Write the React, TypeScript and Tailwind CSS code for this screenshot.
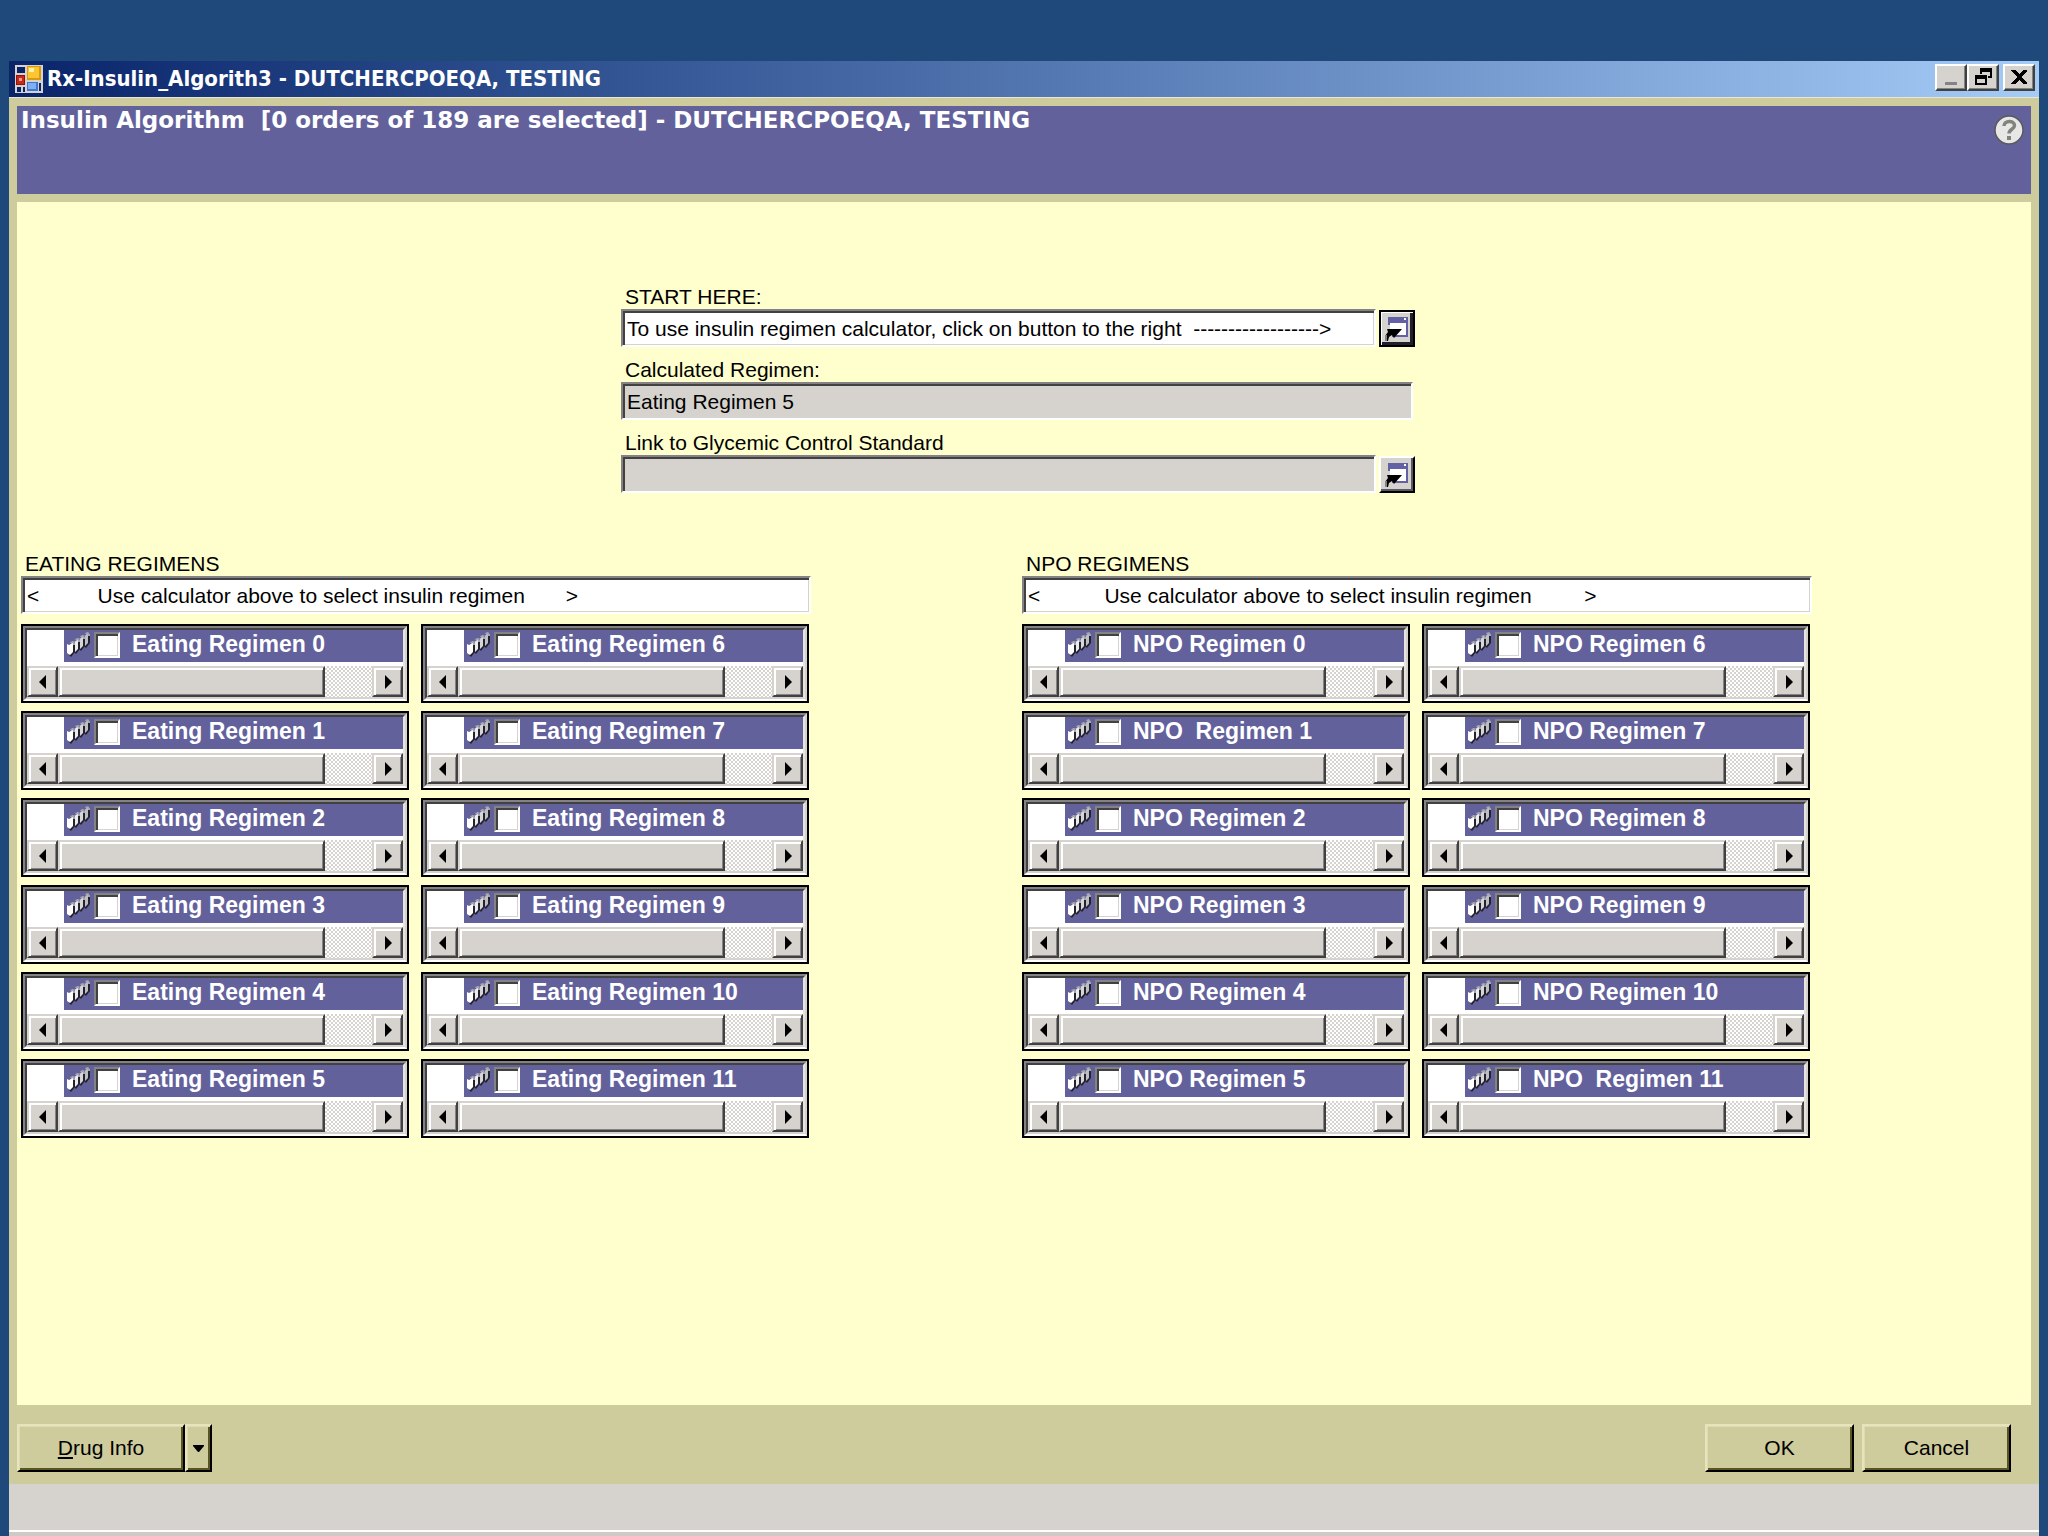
import React from "react";

const SUNKEN =
  "border-2 border-t-[#848284] border-l-[#848284] border-r-white border-b-white shadow-[inset_2px_2px_0_#424142,inset_-1px_-1px_0_#d6d3ce]";
const RAISED =
  "bg-[#d6d3ce] border-2 border-t-[#d6d3ce] border-l-[#d6d3ce] border-r-[#424142] border-b-[#424142] shadow-[inset_2px_2px_0_#ffffff,inset_-1px_-1px_0_#848284]";
const OLIVE_BUTTON =
  "flex h-12 items-center justify-center bg-[#cecb9c] border-2 border-t-[#e7e3bd] border-l-[#e7e3bd] border-r-black border-b-black shadow-[inset_1px_1px_0_#dedbb0,inset_-2px_-2px_0_#5a5520]";

function AppIcon() {
  return (
    <svg width="28" height="28" viewBox="0 0 28 28" shapeRendering="crispEdges" aria-hidden="true">
      <rect width="28" height="28" fill="#d6d3ce" />
      <rect x="2" y="2" width="8" height="6" fill="#0a246a" />
      <rect x="12" y="1" width="14" height="14" fill="#d99a12" />
      <rect x="13" y="2" width="11" height="11" fill="#fbc62f" />
      <rect x="14" y="3" width="5" height="4" fill="#fff0a8" />
      <rect x="1" y="10" width="9" height="10" fill="#8c1408" />
      <rect x="2" y="11" width="7" height="8" fill="#c62a1c" />
      <rect x="4" y="13" width="3" height="3" fill="#f29a88" />
      <rect x="12" y="17" width="11" height="9" fill="#3f78d0" />
      <rect x="13" y="18" width="8" height="6" fill="#7fb0f4" />
      <rect x="2" y="22" width="4" height="5" fill="#0a246a" />
      <rect x="8" y="22" width="2" height="5" fill="#0a246a" />
      <rect x="24" y="18" width="2" height="8" fill="#0a246a" />
    </svg>
  );
}

function LaunchIcon() {
  return (
    <svg width="26" height="28" viewBox="0 0 26 28" aria-hidden="true">
      <g shapeRendering="crispEdges">
        <rect x="4" y="2" width="20" height="20" fill="#6361a5" />
        <rect x="20" y="3" width="2" height="2" fill="#ffffff" />
        <rect x="6" y="8" width="16" height="12" fill="#ffffff" />
        <rect x="4" y="10" width="2" height="8" fill="#d6d3ce" />
        <rect x="4" y="18" width="4" height="4" fill="#d6d3ce" />
      </g>
      <path d="M3 14h15l-8 9-2-3-3 2-1 4H1v-5l3-4z" fill="#000000" />
      <path d="M2 20v6" stroke="#848284" strokeWidth="2" />
    </svg>
  );
}

function CardsIcon() {
  return (
    <svg width="24" height="26" viewBox="0 0 24 26" aria-hidden="true">
      {[
        [15, 1, "#bdbdc4"],
        [10, 4, "#d6d6da"],
        [5, 7, "#ececee"],
        [0, 10, "#ffffff"],
      ].map(([x, y, fill]) => (
        <g key={String(x)} transform={`translate(${x} ${y})`}>
          <path d="M3 4L8 0v10l-4 5-2-2z" fill="#24222c" />
          <path d="M3 0l3-1 2 2v2H5z" fill="#a5a5ad" />
          <path d="M0 2l2 1 4-2v9l-3 3-3-2z" fill={String(fill)} />
        </g>
      ))}
    </svg>
  );
}

function WindowButton({ label, children }: { label: string; children: React.ReactNode }) {
  return (
    <button
      type="button"
      aria-label={label}
      className="flex h-[27px] w-8 items-center justify-center border-2 border-t-white border-l-white border-r-[#424142] border-b-[#424142] bg-[#d6d3ce] shadow-[inset_-1px_-1px_0_#848284]"
    >
      <svg width="20" height="20" viewBox="0 0 20 20" shapeRendering="crispEdges" aria-hidden="true">
        {children}
      </svg>
    </button>
  );
}

function Field({
  id,
  label,
  value,
  readOnly,
  action,
  focused,
}: {
  id: string;
  label: string;
  value: string;
  readOnly?: boolean;
  action?: string;
  focused?: boolean;
}) {
  return (
    <div>
      <label htmlFor={id} className="block pb-[2px] pl-1 leading-5">
        {label}
      </label>
      <div className="flex items-end gap-[3px]">
        <input
          id={id}
          type="text"
          defaultValue={value}
          readOnly={readOnly}
          className={`h-[38px] min-w-0 flex-1 px-1 pt-[2px] outline-none ${SUNKEN} ${readOnly ? "bg-[#d6d3ce]" : "bg-white"}`}
        />
        {action && (
          <button
            type="button"
            aria-label={action}
            className={`flex h-[37px] w-9 items-center justify-center border-2 bg-[#d6d3ce] ${
              focused
                ? "border-black shadow-[inset_1px_1px_0_#ffffff,inset_-3px_-3px_0_#21202a]"
                : "border-t-white border-l-white border-r-black border-b-black shadow-[inset_-2px_-2px_0_#5a5963]"
            }`}
          >
            <LaunchIcon />
          </button>
        )}
      </div>
    </div>
  );
}

function RegimenCard({ name }: { name: string }) {
  return (
    <div className="border-2 border-black">
      <div className="border-2 border-t-[#848284] border-r-[#d6d3ce] border-b-white border-l-[#848284]">
        <div className="border-2 border-t-[#424142] border-r-[#e7e3de] border-b-[#d6d3ce] border-l-[#424142] bg-white">
          <label className="ml-[37px] flex h-8 items-center bg-[#63619c] pb-[2px] pl-[3px]">
            <CardsIcon />
            <input
              type="checkbox"
              className={`ml-[3px] h-[26px] w-[26px] shrink-0 appearance-none bg-white ${SUNKEN}`}
            />
            <span className="ml-3 pb-[2px] text-[23px] leading-7 font-bold whitespace-pre text-white">{name}</span>
          </label>
          <div className="mt-1 flex h-[31px] bg-[repeating-conic-gradient(#ffffff_0_25%,#d6d3ce_0_50%)] bg-[length:4px_4px]">
            <button type="button" aria-label="Scroll left" className={`flex w-[31px] items-center justify-center ${RAISED}`}>
              <svg width="10" height="16" viewBox="0 0 10 16" aria-hidden="true">
                <path d="M8 1v14L1 8z" fill="#000000" />
              </svg>
            </button>
            <div className="flex flex-1">
              <div className={`w-[85%] ${RAISED}`} />
            </div>
            <button type="button" aria-label="Scroll right" className={`flex w-[31px] items-center justify-center ${RAISED}`}>
              <svg width="10" height="16" viewBox="0 0 10 16" aria-hidden="true">
                <path d="M2 1v14L9 8z" fill="#000000" />
              </svg>
            </button>
          </div>
        </div>
      </div>
    </div>
  );
}

function RegimenGroup({ id, title, hint, names }: { id: string; title: string; hint: string; names: string[] }) {
  return (
    <section className="w-full max-w-[790px]">
      <Field id={id} label={title} value={hint} />
      <div className="mt-[10px] grid grid-flow-col grid-cols-2 grid-rows-6 gap-x-3 gap-y-2 pr-[2px]">
        {names.map((name) => (
          <RegimenCard key={name} name={name} />
        ))}
      </div>
    </section>
  );
}

const eating = Array.from({ length: 12 }, (_, i) => `Eating Regimen ${i}`);
const npo = Array.from({ length: 12 }, (_, i) => (i === 1 || i === 11 ? `NPO  Regimen ${i}` : `NPO Regimen ${i}`));

export default function App() {
  return (
    <div className="flex min-h-screen flex-col bg-[#1f497b] px-[9px] pt-[61px] font-['Liberation_Sans',Arial,sans-serif] text-[21px] text-black">
      <header className="flex h-9 items-center bg-linear-to-r from-[#0a246a] to-[#a5cbf7] pr-1 pl-[6px]">
        <AppIcon />
        <h1 className="ml-1 flex-1 font-['DejaVu_Sans_Condensed','DejaVu_Sans',sans-serif] text-[22px] leading-7 font-bold text-white">
          Rx-Insulin_Algorith3 - DUTCHERCPOEQA, TESTING
        </h1>
        <div className="flex pb-1">
          <WindowButton label="Minimize">
            <rect x="4" y="15" width="12" height="3" fill="#848284" />
          </WindowButton>
          <WindowButton label="Restore">
            <path d="M7 1h12v10h-4V9h2V5H9v2H7z" fill="#000000" />
            <path d="M2 8h12v10H2zM4 12v4h8v-4z" fill="#000000" fillRule="evenodd" />
          </WindowButton>
          <div className="ml-1 flex">
            <WindowButton label="Close">
              <path d="M2 3h4l4 4 4-4h4v1l-6 6 6 6v1h-4l-4-4-4 4H2v-1l6-6-6-6z" fill="#000000" />
            </WindowButton>
          </div>
        </div>
      </header>

      <div className="flex flex-1 flex-col border-t border-[#e7e7d6] bg-[#cecb9c]">
        <div className="mx-2 mt-2 mb-2 flex h-[88px] items-start justify-between bg-[#63619c] pr-[7px] pl-1">
          <h2 className="font-['DejaVu_Sans',Verdana,sans-serif] text-[23px] leading-[28px] font-bold whitespace-pre text-white">
            {"Insulin Algorithm  [0 orders of 189 are selected] - DUTCHERCPOEQA, TESTING"}
          </h2>
          <button type="button" aria-label="Help" className="mt-[9px]">
            <svg width="30" height="30" viewBox="0 0 30 30" aria-hidden="true">
              <circle cx="15" cy="15" r="14" fill="#e7e7e7" stroke="#5a5a5a" strokeWidth="1.5" />
              <path d="M10 11c0-6 10.500-6 10.500-.5 0 4-5.500 3.500-5.500 8" fill="none" stroke="#84827c" strokeWidth="3.500" />
              <rect x="13" y="21" width="4" height="4" fill="#84827c" />
            </svg>
          </button>
        </div>

        <main className="mx-2 flex-1 bg-[#ffffce] pt-[85px] pr-4 pb-10 pl-1">
          <form className="mx-auto flex w-full max-w-[794px] flex-col gap-[13px]">
            <Field
              id="start"
              label="START HERE:"
              value="To use insulin regimen calculator, click on button to the right  ------------------>"
              action="Open insulin regimen calculator"
              focused
            />
            <div className="pr-[2px]">
              <Field id="calculated" label="Calculated Regimen:" value="Eating Regimen 5" readOnly />
            </div>
            <Field
              id="link"
              label="Link to Glycemic Control Standard"
              value=""
              readOnly
              action="Open glycemic control standard"
            />
          </form>
          <div className="mt-[61px] grid grid-cols-2 gap-2">
            <RegimenGroup
              id="eating"
              title="EATING REGIMENS"
              hint="<          Use calculator above to select insulin regimen       >"
              names={eating}
            />
            <RegimenGroup
              id="npo"
              title="NPO REGIMENS"
              hint="<           Use calculator above to select insulin regimen         >"
              names={npo}
            />
          </div>
        </main>

        <footer className="flex h-[79px] items-start justify-between pt-[19px] pr-7 pl-2">
          <div className="flex">
            <button type="button" className={`w-[168px] ${OLIVE_BUTTON}`}>
              <span>
                <span className="underline decoration-2 underline-offset-2">D</span>rug Info
              </span>
            </button>
            <button type="button" aria-label="More drug info" className={`w-[27px] ${OLIVE_BUTTON}`}>
              <svg width="11" height="7" viewBox="0 0 11 7" aria-hidden="true">
                <path d="M0 0h11v1L6 7H5L0 1z" fill="#000000" />
              </svg>
            </button>
          </div>
          <div className="flex gap-2">
            <button type="button" className={`w-[149px] ${OLIVE_BUTTON}`}>
              OK
            </button>
            <button type="button" className={`w-[149px] ${OLIVE_BUTTON}`}>
              Cancel
            </button>
          </div>
        </footer>
      </div>
      <div className="h-[46px] bg-[#d6d3ce]" />
      <div className="h-[6px] border-t-2 border-white bg-[#cecbc6]" />
    </div>
  );
}
